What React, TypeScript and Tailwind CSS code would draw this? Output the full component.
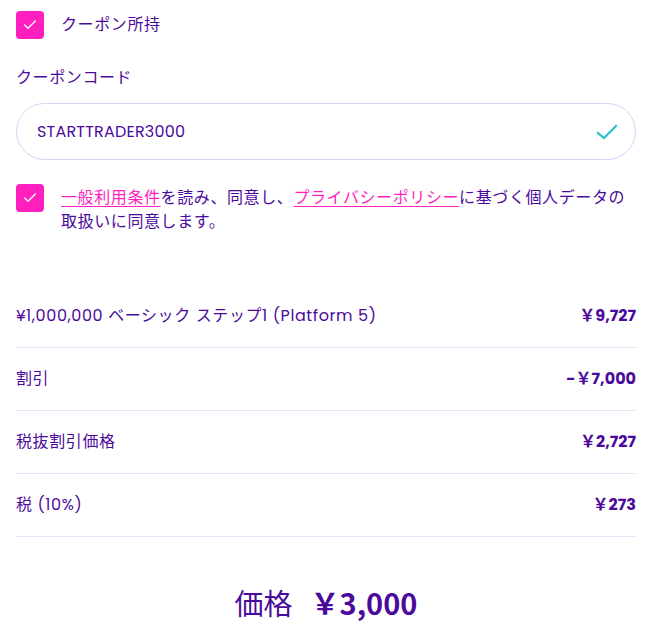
import { Check } from 'lucide-react'

const rows = [
  { label: '¥1,000,000 ベーシック ステップ1 (Platform 5)', value: '￥9,727' },
  { label: '割引', value: '-￥7,000' },
  { label: '税抜割引価格', value: '￥2,727' },
  { label: '税 (10%)', value: '￥273' },
]

function Box() {
  return (
    <span className="flex h-7 w-7 shrink-0 items-center justify-center rounded-[4px] bg-[#ff1fbf]">
      <Check className="h-4 w-4 text-white" strokeWidth={2} />
    </span>
  )
}

export default function App() {
  return (
    <div
      className="min-h-[639px] bg-white pl-4 pr-[31px] pt-[11px] text-[#4b0a9c] tracking-[0.6px]"
      style={{ fontFamily: "Poppins, Inter, 'Noto Sans CJK JP', sans-serif" }}
    >
      {/* coupon toggle */}
      <div className="flex items-center gap-[17px]">
        <Box />
        <span className="text-[16px]">クーポン所持</span>
      </div>

      <div className="mt-[27px] text-[16px] leading-6">クーポンコード</div>

      <div className="mt-[13px] flex h-[57px] items-center justify-between rounded-full border border-[#e3cdfa] pl-[20px] pr-[16px]">
        <span className="text-[16px] tracking-[0.2px]">STARTTRADER3000</span>
        <svg width="24" height="24" viewBox="0 0 24 24" fill="none" stroke="#2bbfcb" strokeWidth="2.2" strokeLinecap="square">
          <path d="M3 13l6 5L21 6" />
        </svg>
      </div>

      {/* agreement */}
      <div className="mt-[24px] flex items-start gap-[17px]">
        <Box />
        <p className="mt-[2px] text-[16px] leading-6">
          <span className="text-[#ff1fbf] underline underline-offset-[3px]">一般利用条件</span>
          を読み、同意し、
          <span className="text-[#ff1fbf] underline underline-offset-[3px]">プライバシーポリシー</span>
          に基づく個人データの取扱いに同意します。
        </p>
      </div>

      {/* summary */}
      <div className="mt-[51px]">
        {rows.map((r) => (
          <div key={r.label} className="flex h-[63px] items-center justify-between border-b border-[#ece3fb] text-[16px]">
            <span>{r.label}</span>
            <span className="font-bold tracking-normal">{r.value}</span>
          </div>
        ))}
      </div>

      <div
        className="mt-[44px] flex items-center justify-center gap-[18px] text-[29px] tracking-normal"
        style={{ fontFamily: "'Noto Sans CJK JP', sans-serif" }}
      >
        <span>価格</span>
        <span className="font-semibold">￥3,000</span>
      </div>
    </div>
  )
}
